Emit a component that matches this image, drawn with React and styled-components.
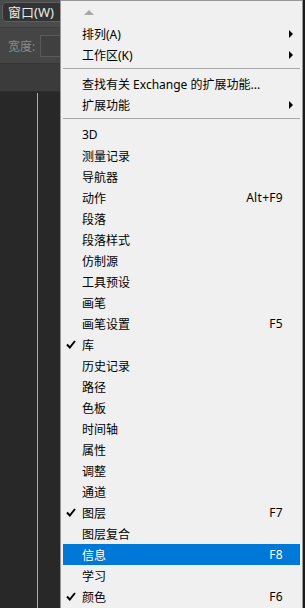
import { createGlobalStyle, styled } from "styled-components";

const GlobalStyle = createGlobalStyle`
  html, body {
    margin: 0;
    padding: 0;
    background: #282828;
  }
  body {
    font-family: "Noto Sans", "Noto Sans CJK SC", sans-serif;
  }
`;

const Screen = styled.div`
  display: flex;
  width: 305px;
  height: 608px;
  overflow: hidden;
  background: #282828;
`;

const Workspace = styled.div`
  width: 60px;
  flex: none;
  display: flex;
  flex-direction: column;
`;

const MenuBar = styled.div`
  height: 28px;
  box-sizing: border-box;
  padding: 2px 0 0 2px;
  background: #4b4b4b;
  border-bottom: 1px solid #3e3e3e;
`;

const MenuTitle = styled.div`
  width: 62px;
  height: 20px;
  box-sizing: border-box;
  border: 1px solid #5e5e5e;
  border-radius: 4px;
  background: #333333;
  color: #eaeaea;
  font-size: 13px;
  line-height: 18px;
  padding-left: 5px;
  white-space: nowrap;
`;

const OptionsBar = styled.div`
  height: 36px;
  box-sizing: border-box;
  display: flex;
  align-items: center;
  gap: 5px;
  padding-left: 8px;
  background: #454545;
  border-bottom: 1px solid #353535;
`;

const OptionLabel = styled.span`
  color: #8c8c8c;
  font-size: 12px;
  white-space: nowrap;
`;

const OptionInput = styled.div`
  width: 30px;
  height: 20px;
  flex: none;
  border: 1px solid #5a5a5a;
  background: #404040;
`;

const TabBand = styled.div`
  height: 27px;
  background: #3b3b3b;
  border-bottom: 1px solid #2e2e2e;
`;

const Canvas = styled.div`
  flex: 1;
  display: flex;
  padding-left: 37px;
  padding-top: 1px;
`;

const Guide = styled.div`
  width: 1px;
  background: #4ad8e4;
`;

const Menu = styled.div`
  width: 243px;
  flex: none;
  box-sizing: border-box;
  background: #f0f0f0;
  border: 1px solid #979797;
  border-bottom: none;
  padding: 1px 2px 0 2px;
  display: flex;
  flex-direction: column;
`;

const Shadow = styled.div`
  flex: 1;
  background: #1c1c1c;
`;

const Row = styled.div`
  height: 21px;
  display: flex;
  align-items: center;
  position: relative;
  padding: 0 17px 0 19px;
  font-size: 12px;
  color: ${(p) => (p.$active ? "#ffffff" : "#000000")};
  background: ${(p) => (p.$active ? "#0078d7" : "transparent")};
  white-space: nowrap;
`;

const Label = styled.span`
  flex: 1;
`;

const Shortcut = styled.span`
  letter-spacing: 0.3px;
`;

const Check = styled.svg`
  position: absolute;
  left: 3px;
  top: 6px;
`;

const SubArrow = styled.span`
  position: absolute;
  right: 7px;
  top: 7px;
  width: 0;
  height: 0;
  border-top: 4px solid transparent;
  border-bottom: 4px solid transparent;
  border-left: 4px solid #000000;
`;

const ScrollUp = styled.div`
  height: 21px;
  display: flex;
  align-items: center;
  padding-left: 21px;
`;

const UpTriangle = styled.span`
  width: 0;
  height: 0;
  border-left: 5px solid transparent;
  border-right: 5px solid transparent;
  border-bottom: 5px solid #a8a8a8;
`;

const Separator = styled.div`
  height: 1px;
  margin: ${(p) => (p.$wide ? "3px 0 5px" : "3px 0 4px")};
  background: #a8a8a8;
`;

const items = [
  { label: "3D" },
  { label: "测量记录" },
  { label: "导航器" },
  { label: "动作", key: "Alt+F9" },
  { label: "段落" },
  { label: "段落样式" },
  { label: "仿制源" },
  { label: "工具预设" },
  { label: "画笔" },
  { label: "画笔设置", key: "F5" },
  { label: "库", checked: true },
  { label: "历史记录" },
  { label: "路径" },
  { label: "色板" },
  { label: "时间轴" },
  { label: "属性" },
  { label: "调整" },
  { label: "通道" },
  { label: "图层", key: "F7", checked: true },
  { label: "图层复合" },
  { label: "信息", key: "F8", active: true },
  { label: "学习" },
  { label: "颜色", key: "F6", checked: true },
];

const CheckMark = () => (
  <Check width="10" height="9" viewBox="0 0 10 9">
    <path d="M1 4.5 L3.8 7.5 L9 1" fill="none" stroke="#000" strokeWidth="2" />
  </Check>
);

const MenuItem = ({ label, shortcut, checked, active, submenu }) => (
  <Row $active={active}>
    {checked && <CheckMark />}
    <Label>{label}</Label>
    {shortcut && <Shortcut>{shortcut}</Shortcut>}
    {submenu && <SubArrow />}
  </Row>
);

const App = () => {
  return (
    <Screen>
      <GlobalStyle />
      <Workspace>
        <MenuBar>
          <MenuTitle>窗口(W)</MenuTitle>
        </MenuBar>
        <OptionsBar>
          <OptionLabel>宽度:</OptionLabel>
          <OptionInput />
        </OptionsBar>
        <TabBand />
        <Canvas>
          <Guide />
        </Canvas>
      </Workspace>
      <Menu>
        <ScrollUp>
          <UpTriangle />
        </ScrollUp>
        <MenuItem label="排列(A)" submenu />
        <MenuItem label="工作区(K)" submenu />
        <Separator />
        <MenuItem label="查找有关 Exchange 的扩展功能..." />
        <MenuItem label="扩展功能" submenu />
        <Separator $wide />
        {items.map((it) => (
          <MenuItem
            key={it.label}
            label={it.label}
            shortcut={it.key}
            checked={it.checked}
            active={it.active}
          />
        ))}
      </Menu>
      <Shadow />
    </Screen>
  );
};

export default App;
